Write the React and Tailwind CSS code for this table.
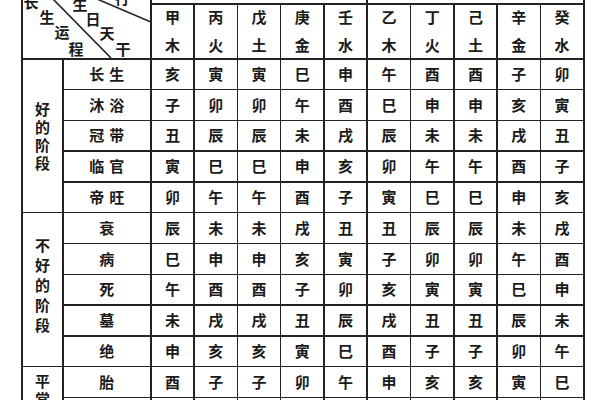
import React from "react";

const heads = [
  ["甲", "木"], ["丙", "火"], ["戊", "土"], ["庚", "金"], ["壬", "水"],
  ["乙", "木"], ["丁", "火"], ["己", "土"], ["辛", "金"], ["癸", "水"],
];

const rows = [
  ["长生", "亥寅寅巳申午酉酉子卯"],
  ["沐浴", "子卯卯午酉巳申申亥寅"],
  ["冠带", "丑辰辰未戌辰未未戌丑"],
  ["临官", "寅巳巳申亥卯午午酉子"],
  ["帝旺", "卯午午酉子寅巳巳申亥"],
  ["衰", "辰未未戌丑丑辰辰未戌"],
  ["病", "巳申申亥寅子卯卯午酉"],
  ["死", "午酉酉子卯亥寅寅巳申"],
  ["墓", "未戌戌丑辰戌丑丑辰未"],
  ["绝", "申亥亥寅巳酉子子卯午"],
  ["胎", "酉子子卯午申亥亥寅巳"],
  ["养", "戌丑丑辰未未戌戌丑辰"],
];

function Row({ label, data }) {
  return (
    <>
      <div className="bg-white flex items-center justify-center tracking-[5px] pl-[5px]">
        {label}
      </div>
      {data.split("").map((c, i) => (
        <div key={i} className="bg-white flex items-center justify-center">
          {c}
        </div>
      ))}
    </>
  );
}

function Group({ chars, className }) {
  return (
    <div className={`bg-white flex flex-col items-center ${className}`}>
      {chars.split("").map((c, i) => (
        <span key={i}>{c}</span>
      ))}
    </div>
  );
}

export default function App() {
  return (
    <div className="w-[600px] h-[400px] overflow-hidden bg-white text-[15px] font-bold text-[#1a1a1a] font-['Noto_Sans_CJK_SC',sans-serif]">
      <div className="ml-[21px] w-[564px] bg-[#222] px-[2px] grid gap-[1.5px] grid-cols-[39px_86.5px_repeat(10,41.8px)] grid-rows-[3px_53.5px_repeat(13,29.3px)]">
        {/* diagonal header */}
        <div className="bg-white col-span-2 row-span-2 relative overflow-hidden">
          <svg className="absolute inset-0" width="127" height="58" viewBox="0 0 127 58">
            <line x1="29" y1="-2" x2="88" y2="58" stroke="#222" strokeWidth="1.6" />
            <line x1="74" y1="-1" x2="128" y2="22" stroke="#222" strokeWidth="1.6" />
          </svg>
          <span className="absolute left-[0px] top-[-8px] w-[16px] h-[20px] leading-[20px] text-center">长</span>
          <span className="absolute left-[16px] top-[7px] w-[16px] h-[20px] leading-[20px] text-center">生</span>
          <span className="absolute left-[31px] top-[22px] w-[16px] h-[20px] leading-[20px] text-center">运</span>
          <span className="absolute left-[45px] top-[39px] w-[16px] h-[20px] leading-[20px] text-center">程</span>
          <span className="absolute left-[49px] top-[-6px] w-[16px] h-[20px] leading-[20px] text-center">生</span>
          <span className="absolute left-[62px] top-[9px] w-[16px] h-[20px] leading-[20px] text-center">日</span>
          <span className="absolute left-[76px] top-[23px] w-[16px] h-[20px] leading-[20px] text-center">天</span>
          <span className="absolute left-[92px] top-[39px] w-[16px] h-[20px] leading-[20px] text-center">干</span>
          <span className="absolute left-[91px] top-[-12px] w-[16px] h-[20px] leading-[20px] text-center">行</span>
        </div>
        <div className="bg-white col-span-5"></div>
        <div className="bg-white col-span-5"></div>
        {heads.map(([a, b], i) => (
          <div key={i} className="bg-white flex flex-col items-center justify-center leading-[28px]">
            <span>{a}</span>
            <span>{b}</span>
          </div>
        ))}
        <Group chars="好的阶段" className="row-span-5 justify-center leading-[18px]" />
        {rows.slice(0, 5).map(([l, d]) => <Row key={l} label={l} data={d} />)}
        <Group chars="不好的阶段" className="row-span-5 justify-center leading-[20px] pb-[10px]" />
        {rows.slice(5, 10).map(([l, d]) => <Row key={l} label={l} data={d} />)}
        <Group chars="平常" className="row-span-2 justify-start leading-[18px] pt-[5px]" />
        {rows.slice(10, 12).map(([l, d]) => <Row key={l} label={l} data={d} />)}
      </div>
    </div>
  );
}
